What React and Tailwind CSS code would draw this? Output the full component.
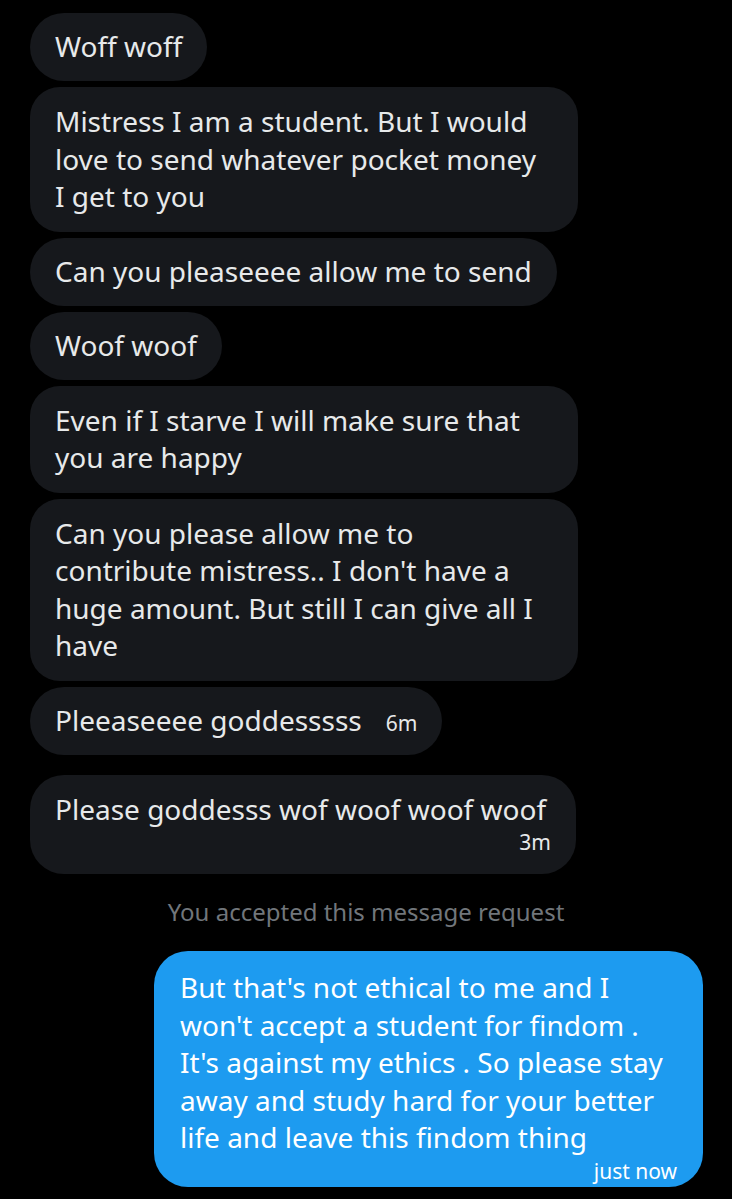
import React from 'react';

const theirs = [
  { lines: ['Woff woff'] },
  { lines: ['Mistress I am a student. But I would', 'love to send whatever pocket money', 'I get to you'] },
  { lines: ['Can you pleaseeee allow me to send'] },
  { lines: ['Woof woof'] },
  { lines: ['Even if I starve I will make sure that', 'you are happy'] },
  { lines: ['Can you please allow me to', "contribute mistress.. I don't have a", 'huge amount. But still I can give all I', 'have'] },
  { lines: ['Pleeaseeee goddesssss'], inlineTime: '6m' },
];

const mine = [
  "But that's not ethical to me and I",
  "won't accept a student for findom .",
  "It's against my ethics . So please stay",
  'away and study hard for your better',
  'life and leave this findom thing',
];

function Bubble({ lines, inlineTime }) {
  const multi = lines.length > 1;
  return (
    <div className={`self-start bg-[#16181c] px-[25px] text-[28px] leading-[37.5px] text-[#e7e9ea] ${multi ? 'w-[548px] rounded-[30px] py-[16px]' : 'h-[68px] rounded-[34px] py-[15px]'}`}>
      {lines.map((l, i) => (
        <div key={i} className="whitespace-nowrap">
          {l}
          {inlineTime && <span className="ml-[24px] text-[21px] leading-[20px]">{inlineTime}</span>}
        </div>
      ))}
    </div>
  );
}

export default function App() {
  return (
    <div className="min-h-[1199px] w-[732px] bg-black pt-[13px] font-['Noto_Sans',sans-serif]">
      <div className="flex flex-col gap-[6px] px-[30px]">
        {theirs.map((m, i) => (
          <Bubble key={i} {...m} />
        ))}
      </div>

      <div className="mx-[30px] mt-[20px] w-[546px] rounded-[34px] bg-[#16181c] px-[25px] pb-[18px] pt-[16px] text-[#e7e9ea]">
        <p className="whitespace-nowrap text-[28px] leading-[37.5px]">Please goddesss wof woof woof woof</p>
        <p className="text-right text-[21px] leading-[28px]">3m</p>
      </div>

      <p className="mt-[25px] text-center text-[24px] leading-[26px] text-[#71767b]">You accepted this message request</p>

      <div className="mt-[26px] flex justify-end pr-[29px]">
        <div className="w-[549px] rounded-[34px] bg-[#1d9bf0] px-[26px] pb-[2px] pt-[18px] text-white">
          {mine.map((l, i) => (
            <p key={i} className="whitespace-nowrap text-[28px] leading-[37.5px]">{l}</p>
          ))}
          <p className="text-right text-[21px] leading-[28px]">just now</p>
        </div>
      </div>
    </div>
  );
}
